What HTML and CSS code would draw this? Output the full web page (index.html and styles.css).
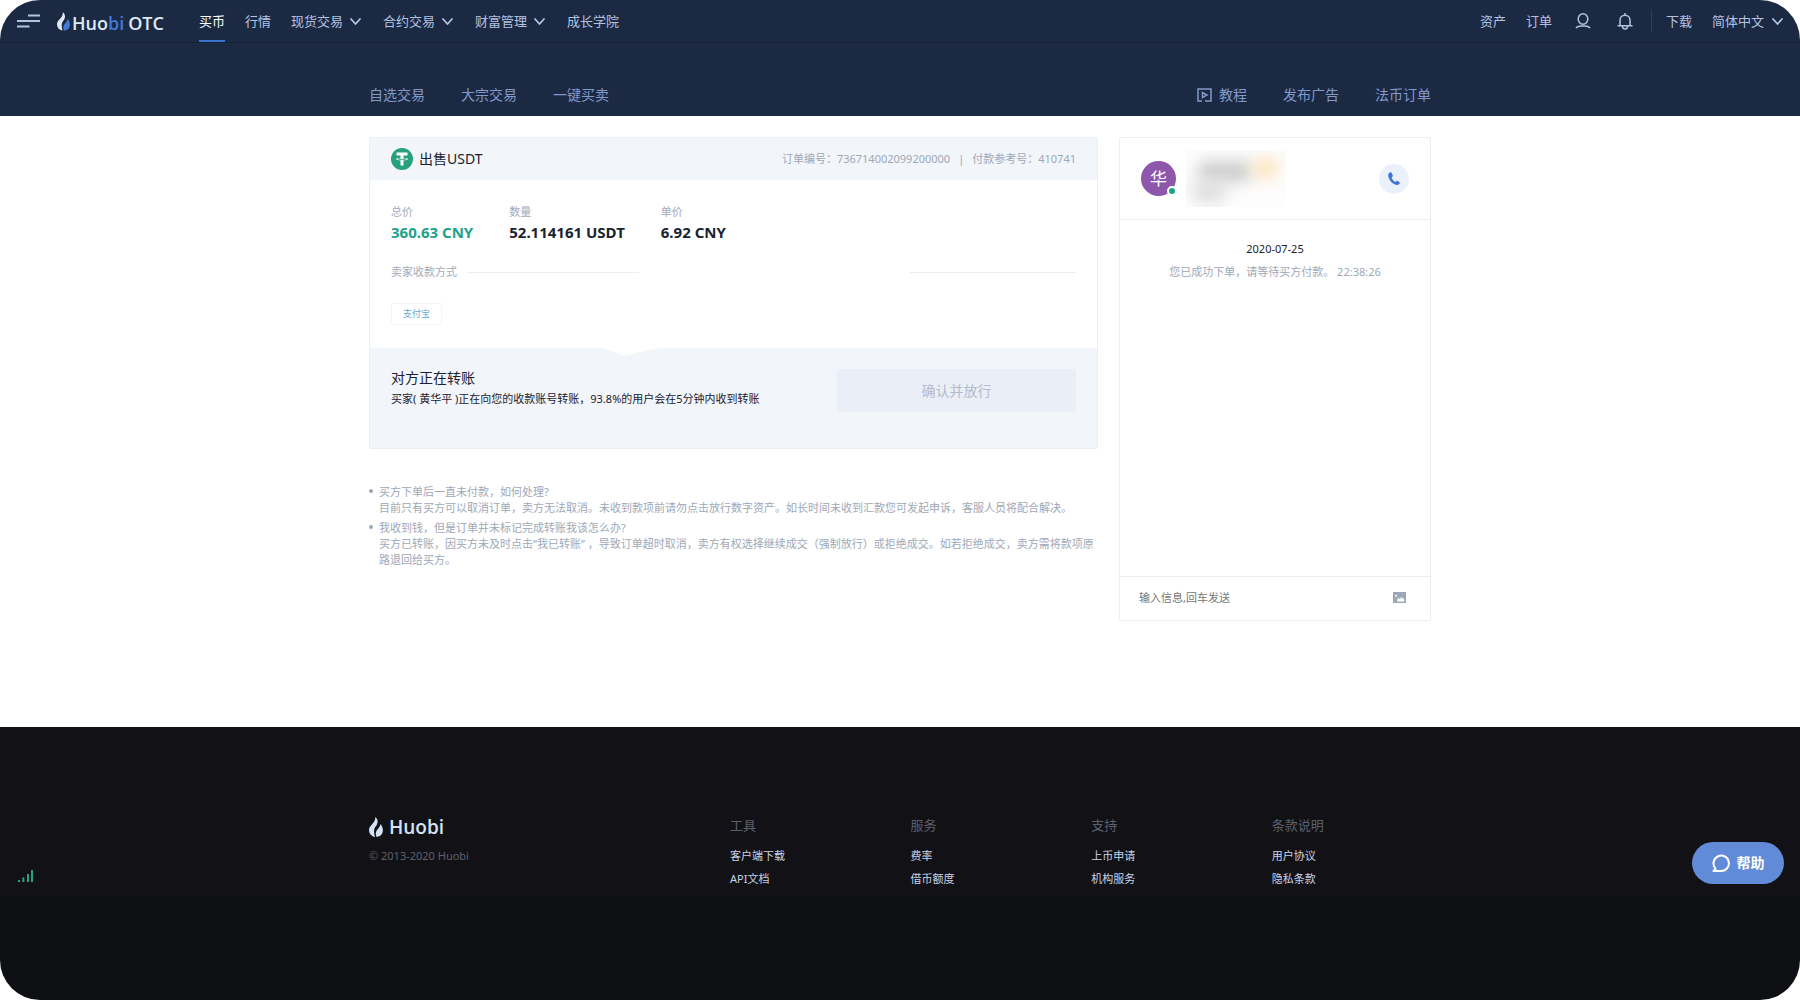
FILE: index.html
```html
<!DOCTYPE html>
<html lang="zh-CN">
<head>
<meta charset="utf-8">
<meta name="viewport" content="width=device-width, initial-scale=1">
<title>Huobi OTC</title>
<link rel="stylesheet" href="styles.css">
</head>
<body>
<svg class="sprite" aria-hidden="true">
  <symbol id="chevron" viewBox="0 0 15 15"><path d="M3 5l4.500 5L12 5" fill="none" stroke="currentColor" stroke-width="1.800" stroke-linecap="round" stroke-linejoin="round"/></symbol>
  <symbol id="flame-back" viewBox="0 0 14 20"><path d="M6.300 0C9.300 2.300 9.300 6.200 7 9 4.900 11.600 4.500 14.300 6 20 2.200 19 0 16.300 0 12.900 0 8.300 6.700 6.200 6.300 0z" fill="currentColor"/></symbol>
  <symbol id="flame-front" viewBox="0 0 14 20"><path d="M11.300 7C13.900 9.600 14.700 13.800 13 16.700 12 18.500 10.200 19.600 7.600 20 6 16.500 6.900 14 8.900 11.900 10.500 10.200 11.400 8.800 11.300 7z" fill="currentColor"/></symbol>
</svg>
<div class="app">
  <header class="header">
    <div class="topbar">
      <button class="menu-toggle" type="button" aria-label="菜单">
        <svg width="23" height="14" viewBox="0 0 23 14"><path d="M11 1.500h12M0 7h23M0 12.500h12.500" stroke="currentColor" stroke-width="1.800"/></svg>
      </button>
      <a class="brand" href="#">
        <svg class="brand-flame" width="13" height="19" viewBox="0 0 14 20"><use href="#flame-back"/><use class="accent" href="#flame-front"/></svg>
        <span class="brand-name">Huo<span class="accent">bi</span></span><span class="brand-otc">OTC</span>
      </a>
      <nav class="main-nav" aria-label="主导航">
        <a class="nav-item active" href="#">买币</a>
        <a class="nav-item" href="#">行情</a>
        <button class="nav-item" type="button" aria-haspopup="true">现货交易<svg class="chevron"><use href="#chevron"/></svg></button>
        <button class="nav-item" type="button" aria-haspopup="true">合约交易<svg class="chevron"><use href="#chevron"/></svg></button>
        <button class="nav-item" type="button" aria-haspopup="true">财富管理<svg class="chevron"><use href="#chevron"/></svg></button>
        <a class="nav-item" href="#">成长学院</a>
      </nav>
      <div class="tools">
        <a class="nav-item" href="#">资产</a>
        <a class="nav-item" href="#">订单</a>
        <button class="icon-button" type="button" aria-label="账户">
          <svg width="16" height="16" viewBox="0 0 16 16" fill="none" stroke="currentColor" stroke-width="1.500"><ellipse cx="8" cy="6" rx="4.800" ry="5.200"/><path d="M1 15.200c1-1.700 3-2.200 5-2.200h4c2 0 4 .5 5 2.200"/></svg>
        </button>
        <button class="icon-button" type="button" aria-label="通知">
          <svg width="16" height="17" viewBox="0 0 16 17" fill="none" stroke="currentColor" stroke-width="1.500"><path d="M8 0v2M3 12.500V7.300C3 4.300 5.200 2.200 8 2.200s5 2.100 5 5.100v5.200M.5 12.700h15M5.300 13c.3 4 5.100 4 5.400 0"/></svg>
        </button>
        <span class="divider"></span>
        <a class="nav-item" href="#">下载</a>
        <span class="language">
          <select aria-label="语言"><option>简体中文</option></select>
          <svg class="chevron"><use href="#chevron"/></svg>
        </span>
      </div>
    </div>
    <nav class="subnav container" aria-label="交易导航">
      <div class="subnav-group">
        <a href="#">自选交易</a>
        <a href="#">大宗交易</a>
        <a href="#">一键买卖</a>
      </div>
      <div class="subnav-group">
        <a class="tutorial" href="#"><svg width="15" height="14" viewBox="0 0 15 14" fill="none" stroke="currentColor" stroke-width="1.500"><path d="M5 13H1V1h13v12H8M10 13h4"/><path d="M5.500 4.500v5L10 7z"/></svg>教程</a>
        <a href="#">发布广告</a>
        <a href="#">法币订单</a>
      </div>
    </nav>
  </header>

  <main class="main container">
    <div class="order-column">
      <section class="order-card">
        <header class="order-head">
          <svg width="22" height="22" viewBox="0 0 22 22"><circle cx="11" cy="11" r="11" fill="#26a17b"/><path d="M5.500 4.500h11v3h-4v2.200c2.700.1 4.600.6 4.600 1.300s-1.900 1.200-4.600 1.300V17.500h-3v-5.200c-2.700-.1-4.600-.6-4.600-1.300s1.900-1.200 4.600-1.300V7.500h-4z" fill="#fff"/><path d="M9.500 10.200c-2 .1-3.500.4-3.500.7 0 .4 2.200.8 5 .8s5-.4 5-.8c0-.3-1.500-.6-3.500-.7v.8h-3z" fill="#26a17b"/></svg>
          <h1>出售USDT</h1>
          <p class="order-refs"><span>订单编号：736714002099200000</span><span>|</span><span>付款参考号：410741</span></p>
        </header>
        <div class="order-body">
          <dl class="stats">
            <div><dt>总价</dt><dd class="total">360.63 CNY</dd></div>
            <div><dt>数量</dt><dd>52.114161 USDT</dd></div>
            <div><dt>单价</dt><dd>6.92 CNY</dd></div>
          </dl>
          <div class="method-row"><h2>卖家收款方式</h2><span class="rule"></span><span class="rule rule-end"></span></div>
          <button class="method" type="button">支付宝</button>
        </div>
        <div class="order-action">
          <svg class="notch" width="60" height="8" viewBox="0 0 60 8"><path d="M0 0h60C48 1 37 4 25 7q-5 1-9-.5C10 4 5 1 0 0z" fill="#fff"/></svg>
          <div>
            <h2>对方正在转账</h2>
            <p>买家( 黄华平 )正在向您的收款账号转账，93.8%的用户会在5分钟内收到转账</p>
          </div>
          <button class="confirm" type="button" disabled>确认并放行</button>
        </div>
      </section>
      <ul class="faq">
        <li>买方下单后一直未付款，如何处理?<br>目前只有买方可以取消订单，卖方无法取消。未收到款项前请勿点击放行数字资产。如长时间未收到汇款您可发起申诉，客服人员将配合解决。</li>
        <li>我收到钱，但是订单并未标记完成转账我该怎么办?<br>买方已转账，因买方未及时点击“我已转账” ，导致订单超时取消，卖方有权选择继续成交（强制放行）或拒绝成交。如若拒绝成交，卖方需将款项原路退回给买方。</li>
      </ul>
    </div>

    <section class="chat" aria-label="聊天">
      <header class="chat-head">
        <span class="avatar">华<span class="online"></span></span>
        <span class="masked-name"><span class="smudge smudge-name"></span><span class="smudge smudge-badge"></span><span class="smudge smudge-note"></span></span>
        <button class="call" type="button" aria-label="拨打电话">
          <svg width="12" height="13" viewBox="0 0 12 13"><path d="M2.300.3C.6 1 0 2.500.4 4.600c.8 4 3.700 7.300 7.500 8.200 1.600.3 3-.2 3.800-1.400.3-.4.2-.9-.2-1.200L9.700 9c-.4-.3-.9-.2-1.200.1l-1 .9C5.600 9.200 4.200 7.400 3.600 5.400l1-.9c.3-.3.400-.6.2-1L3.600.7C3.400.3 2.800.1 2.300.3z" fill="#3a77d8"/></svg>
        </button>
      </header>
      <div class="chat-log">
        <time datetime="2020-07-25">2020-07-25</time>
        <p>您已成功下单，请等待买方付款。 22:38:26</p>
      </div>
      <form class="composer">
        <input type="text" placeholder="输入信息,回车发送" aria-label="输入信息">
        <button type="button" aria-label="发送图片">
          <svg width="13" height="11" viewBox="0 0 13 11"><path d="M0 0h13v11H0z" fill="#9da7ba"/><path d="M4 9.500L5 5.500l1.600 1.800L8.500 5l1.200 1.800 1-.8.800 3.500z" fill="#fff"/><circle cx="3" cy="3.700" r="1" fill="#fff"/></svg>
        </button>
      </form>
    </section>
  </main>

  <footer class="footer">
    <div class="footer-main">
      <div class="footer-grid container">
        <div>
          <a class="footer-brand" href="#"><svg width="14" height="20" viewBox="0 0 14 20"><use href="#flame-back"/><use href="#flame-front"/></svg>Huobi</a>
          <p class="copyright">© 2013-2020 Huobi</p>
        </div>
        <nav aria-label="工具"><h3>工具</h3><a href="#">客户端下载</a><a href="#">API文档</a></nav>
        <nav aria-label="服务"><h3>服务</h3><a href="#">费率</a><a href="#">借币额度</a></nav>
        <nav aria-label="支持"><h3>支持</h3><a href="#">上币申请</a><a href="#">机构服务</a></nav>
        <nav aria-label="条款说明"><h3>条款说明</h3><a href="#">用户协议</a><a href="#">隐私条款</a></nav>
      </div>
    </div>
  </footer>

  <svg class="signal" width="15" height="12" viewBox="0 0 15 12" role="img" aria-label="网络状态"><path d="M0 10h2v2H0zM4.300 7.500h2V12h-2zM9 4h2v8H9zM13 0h2v12h-2z" fill="#26a184"/></svg>
  <button class="help" type="button">
    <svg width="18" height="18" viewBox="0 0 18 18" fill="none" stroke="currentColor" stroke-width="2" stroke-linecap="round" stroke-linejoin="round"><path d="M1.500 17h7.800A7.700 7.700 0 1 0 2.800 13.600L3.600 15z"/></svg>帮助
  </button>
</div>
</body>
</html>
```
FILE: styles.css
```css
* { box-sizing: border-box; }

body {
  margin: 0;
  background: #fff;
  color: #1b2230;
  font-family: "Noto Sans", "Noto Sans CJK SC", sans-serif;
  font-size: 11px;
  line-height: 16px;
}

h1, h2, h3, p, dl, dd, ul { margin: 0; padding: 0; font-weight: 400; }
a { color: inherit; text-decoration: none; }
button, input, select { font: inherit; color: inherit; background: none; border: 0; padding: 0; margin: 0; }
button { cursor: pointer; }
svg { display: block; flex: none; }

.sprite { position: absolute; width: 0; height: 0; }

.app {
  display: flex;
  flex-direction: column;
  min-height: 100vh;
  border-radius: 40px;
  overflow: hidden;
  background: #fff;
}

.container { width: 100%; max-width: 1062px; margin: 0 auto; }

/* Header */
.header { background: #1c2943; color: #b5c3e2; }

.topbar {
  display: flex;
  align-items: stretch;
  height: 43px;
  padding: 0 15px 0 16px;
  border-bottom: 1px solid #14203a;
}
.menu-toggle { padding-left: 1px; }
.brand { display: flex; align-items: center; margin-left: 17px; padding-top: 4px; color: #dfe9f8; }
.accent { color: #3f7bd6; }
.brand-flame { margin-top: -4px; }
.brand-name { margin-left: 2px; font: 600 18px/20px "Open Sans", sans-serif; }
.brand-otc { margin-left: 4px; font: 600 18px/20px "Open Sans", sans-serif; }

.main-nav, .tools { display: flex; align-items: stretch; gap: 20px; }
.main-nav { margin-left: 35px; }
.tools { margin-left: auto; align-items: center; }
.nav-item {
  display: flex;
  align-items: center;
  gap: 5px;
  font-size: 13px;
  line-height: 18px;
  white-space: nowrap;
}
.nav-item.active { color: #fff; box-shadow: inset 0 -2px #3a73cc; }
.chevron { width: 15px; height: 15px; }
.icon-button { display: flex; justify-content: center; width: 22px; }
.icon-button + .divider { margin: 0 -6px 0 -5px; }
.divider { width: 1px; height: 22px; background: #2f3c58; }
.language { position: relative; display: flex; align-items: center; }
.language select { appearance: none; padding-right: 20px; font-size: 13px; line-height: 18px; }
.language .chevron { position: absolute; right: 0; pointer-events: none; }

.subnav { display: flex; justify-content: space-between; padding: 42px 0 11px; color: #8199cb; }
.subnav-group { display: flex; gap: 36px; font-size: 14px; line-height: 20px; }
.tutorial { display: flex; align-items: center; gap: 7px; }

/* Order */
.main {
  display: grid;
  grid-template-columns: minmax(0, 1fr) 312px;
  gap: 21px;
  align-items: start;
  padding: 21px 0 106px;
}
.order-card { border: 1px solid #e9eff3; border-radius: 2px; overflow: hidden; }
.order-head {
  display: flex;
  align-items: center;
  gap: 6px;
  height: 42px;
  padding: 0 21px;
  background: #f2f5fa;
}
.order-head h1 { font-size: 14px; line-height: 20px; }
.order-refs { display: flex; gap: 8px; margin-left: auto; color: #9ea8b7; }
.order-body { padding: 24px 21px 23px; }
.stats { display: flex; gap: 36px; }
.stats dt { color: #a3abb9; }
.stats dd { font-size: 15px; font-weight: 700; line-height: 24px; }
.stats .total { color: #1ea189; }
.method-row { display: flex; align-items: center; gap: 10px; margin-top: 20px; color: #a3abb9; }
.method-row h2 { font-size: 11px; }
.rule { width: 172px; height: 1px; background: #e8eff2; }
.rule-end { width: 166px; margin-left: auto; }
.method {
  display: block;
  height: 22px;
  margin-top: 23px;
  padding: 0 11px;
  border: 1px solid #f1f7f9;
  border-radius: 2px;
  color: #5fa9d3;
  font-size: 9px;
}
.order-action {
  position: relative;
  display: flex;
  justify-content: space-between;
  min-height: 100px;
  padding: 21px;
  background: #f2f5fa;
}
.notch { position: absolute; top: 0; left: 32%; }
.order-action h2 { font-size: 14px; line-height: 18px; }
.order-action p { line-height: 24px; }
.confirm {
  width: 239px;
  height: 43px;
  border-radius: 2px;
  background: #e9eef7;
  color: #b3bccb;
  font-size: 14px;
}

.faq { margin-top: 35px; list-style: none; color: #9ea8b7; }
.faq li { position: relative; padding-left: 10px; }
.faq li + li { margin-top: 4px; }
.faq li::before {
  content: "";
  position: absolute;
  top: 5px;
  left: 0;
  width: 4px;
  height: 4px;
  border-radius: 50%;
  background: #9ea8b7;
}

/* Chat */
.chat { border: 1px solid #e9eff3; border-radius: 2px; }
.chat-head {
  display: flex;
  align-items: center;
  height: 82px;
  padding: 0 21px;
  border-bottom: 1px solid #e9eff3;
}
.avatar {
  position: relative;
  width: 35px;
  height: 35px;
  border-radius: 50%;
  background: #8e57ac;
  color: #fff;
  font-size: 17px;
  line-height: 35px;
  text-align: center;
}
.online {
  position: absolute;
  right: -1px;
  bottom: 0;
  width: 10px;
  height: 10px;
  border: 2px solid #fff;
  border-radius: 50%;
  background: #1ba38c;
}
.masked-name { position: relative; width: 100px; height: 57px; margin: 0 0 0 10px; overflow: hidden; background: #fdfdfd; }
.smudge { position: absolute; border-radius: 8px; filter: blur(8px); }
.smudge-name { top: 12px; left: 12px; width: 54px; height: 19px; background: #c8c8c8; }
.smudge-badge { top: 8px; left: 68px; width: 24px; height: 20px; background: #fde3b8; }
.smudge-note { top: 32px; left: 6px; width: 34px; height: 20px; background: #dcdcdc; }
.call {
  display: flex;
  align-items: center;
  justify-content: center;
  width: 30px;
  height: 30px;
  margin-left: auto;
  border-radius: 50%;
  background: #eaf1fb;
}
.chat-log { min-height: 356px; padding-top: 20px; text-align: center; color: #9ea8b7; }
.chat-log time { display: block; color: #1b2230; line-height: 18px; }
.chat-log p { margin-top: 6px; }
.composer {
  display: flex;
  align-items: center;
  height: 44px;
  padding: 0 24px 2px 19px;
  border-top: 1px solid #e9eff3;
}
.composer input { flex: 1; min-width: 0; outline: 0; }
.composer input::placeholder { color: #757575; opacity: 1; }

/* Footer */
.footer { flex: 1; background: #0f1014; }
.footer-main { background: #121216; padding: 89px 0 6px; }
.footer-grid { display: grid; grid-template-columns: 34% repeat(3, 17%) auto; }
.footer-grid nav { display: flex; flex-direction: column; align-items: flex-start; color: #c9d2e6; line-height: 23px; }
.footer-grid h3 { margin-bottom: 9px; color: #5d606c; font-size: 13px; line-height: 19px; }
.footer-brand {
  display: flex;
  align-items: center;
  gap: 6px;
  color: #d5e2f5;
  font: 600 19px/22px "Open Sans", sans-serif;
}
.copyright { margin-top: 8px; color: #5d606c; line-height: 20px; font-size: 11px; }

/* Floating controls */
.signal { position: fixed; left: 18px; bottom: 118px; }
.help {
  position: fixed;
  right: 16px;
  bottom: 116px;
  display: flex;
  align-items: center;
  justify-content: center;
  gap: 7px;
  width: 92px;
  height: 42px;
  border-radius: 21px;
  background: #628bd7;
  color: #fff;
  font-size: 14px;
  font-weight: 700;
}
```
